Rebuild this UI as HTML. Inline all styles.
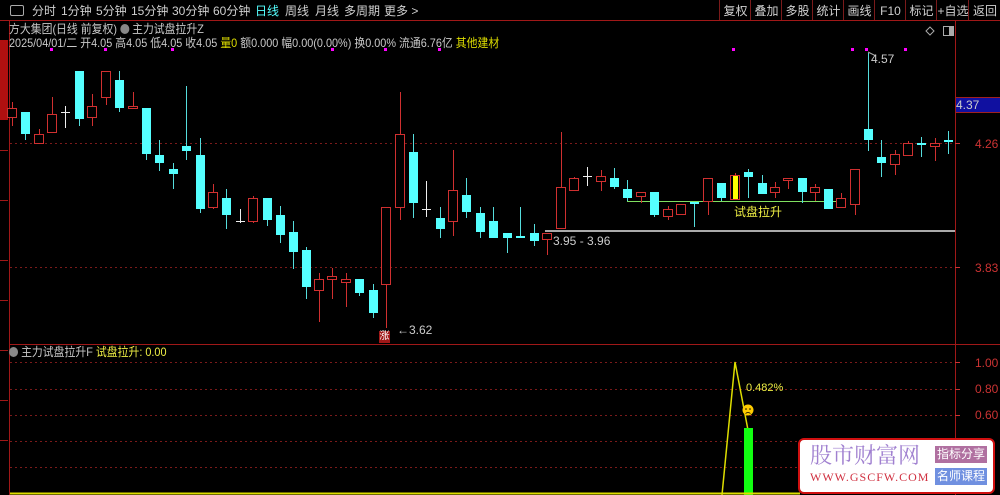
<!DOCTYPE html>
<html><head><meta charset="utf-8"><style>
html,body{margin:0;padding:0;background:#000;width:1000px;height:495px;overflow:hidden}
body{position:relative;font-family:"Liberation Sans","Noto Sans CJK SC",sans-serif;color:#c8c8c8}
.t{position:absolute;white-space:nowrap;font-size:12px;line-height:14px}
.sq{transform:scaleX(0.905);transform-origin:0 0}
.tb{position:absolute;top:0;height:20px;font-size:12px;line-height:22px;color:#d0d0d0;white-space:nowrap}
.btn{position:absolute;top:0;height:20px;border-left:1px solid #7a1a1a;text-align:center;font-size:12px;line-height:22px;color:#d0d0d0}
</style></head><body>
<svg id="s" width="1000" height="495" style="position:absolute;left:0;top:0"></svg>
<div class="tb" style="left:10px;width:18px;"><span style="display:inline-block;width:12px;height:9px;border:1px solid #aaa;margin-top:5px;border-radius:2px"></span></div>
<div class="tb" style="left:32px">分时</div>
<div class="tb" style="left:61px">1分钟</div>
<div class="tb" style="left:96px">5分钟</div>
<div class="tb" style="left:131px">15分钟</div>
<div class="tb" style="left:172px">30分钟</div>
<div class="tb" style="left:213px">60分钟</div>
<div class="tb" style="left:255px;color:#5ff">日线</div>
<div class="tb" style="left:285px">周线</div>
<div class="tb" style="left:315px">月线</div>
<div class="tb" style="left:344px">多周期</div>
<div class="tb" style="left:384px">更多 &gt;</div>
<div class="btn" style="left:719px;width:31px">复权</div>
<div class="btn" style="left:750px;width:31px">叠加</div>
<div class="btn" style="left:781px;width:31px">多股</div>
<div class="btn" style="left:812px;width:31px">统计</div>
<div class="btn" style="left:843px;width:31px">画线</div>
<div class="btn" style="left:874px;width:31px">F10</div>
<div class="btn" style="left:905px;width:31px">标记</div>
<div class="btn" style="left:936px;width:32px">+自选</div>
<div class="btn" style="left:968px;width:32px">返回</div>
<div class="t sq" style="left:9px;top:22px;color:#c8c8c8">方大集团(日线 前复权) <span style="display:inline-block;width:10px;height:10px;border-radius:5px;background:#888;vertical-align:-1px"></span> 主力试盘拉升Z</div>
<div class="t sq" style="left:9px;top:36px;color:#c8c8c8">2025/04/01/二 开4.05 高4.05 低4.05 收4.05 <span style="color:#dd0">量0</span> 额0.000 幅0.00(0.00%) 换0.00% 流通6.76亿 <span style="color:#dd0">其他建材</span></div>
<div class="t sq" style="left:9px;top:345px;color:#c8c8c8"><span style="display:inline-block;width:10px;height:10px;border-radius:5px;background:#888;vertical-align:-1px"></span> 主力试盘拉升F <span style="color:#ee4">试盘拉升: 0.00</span></div>
<div class="t" style="left:734px;top:205px;color:#ee4">试盘拉升</div>
<div class="t" style="left:553px;top:234px;color:#ccc">3.95 - 3.96</div>
<div class="t" style="left:397px;top:323px;color:#ccc">←3.62</div>
<div class="t" style="left:871px;top:52px;color:#ccc">4.57</div>
<div class="t" style="left:379px;top:331px;width:11px;height:12px;background:#a01818;color:#fff;font-size:10px;line-height:12px;text-align:center">涨</div>
<div class="t" style="left:746px;top:381px;color:#ee4;font-size:11px">0.482%</div>
<div class="t" style="left:956px;top:97px;width:44px;height:14px;background:#1010a0;color:#ccc;border-top:1px solid #a02020;border-bottom:1px solid #a02020">4.37</div>
<div class="t" style="left:975px;top:137px;color:#c33">4.26</div>
<div class="t" style="left:975px;top:261px;color:#c33">3.83</div>
<div class="t" style="left:975px;top:356px;color:#c33">1.00</div>
<div class="t" style="left:975px;top:382px;color:#c33">0.80</div>
<div class="t" style="left:975px;top:408px;color:#c33">0.60</div>
<div style="position:absolute;left:798px;top:438px;width:193px;height:52px;background:#fff;border:2px solid #d01010;border-radius:6px"></div>
<div class="t" style="left:810px;top:443px;font-size:22px;line-height:24px;color:#a080d0;font-family:'Noto Serif CJK SC',serif">股市财富网</div>
<div class="t" style="left:810px;top:470px;font-size:12px;color:#d03040;font-family:'Liberation Serif',serif;letter-spacing:1px">WWW.GSCFW.COM</div>
<div class="t" style="left:935px;top:446px;width:52px;height:17px;line-height:17px;background:#b070a0;color:#fff;text-align:center">指标分享</div>
<div class="t" style="left:935px;top:468px;width:52px;height:17px;line-height:17px;background:#7090e0;color:#fff;text-align:center">名师课程</div>
<script>
const s=document.getElementById('s');let h='';
const L=(x1,y1,x2,y2,c,w,d)=>h+=`<line x1="${x1}" y1="${y1}" x2="${x2}" y2="${y2}" stroke="${c}" stroke-width="${w||1}" ${d?'stroke-dasharray="'+d+'"':''}/>`;
const R=(x,y,w,hh,f,st)=>h+=`<rect x="${x}" y="${y}" width="${w}" height="${hh}" fill="${f}" ${st?'stroke="'+st+'"':''}/>`;
L(0,20.5,1000,20.5,'#a01818');
L(9.5,20,9.5,495,'#a01818');
L(955.5,20,955.5,495,'#a01818');
L(9,344.5,1000,344.5,'#a01818');
R(0,40,8,80,'#b01010');
[150,200,260,300,350,400,440].forEach(y=>L(0,y+.5,8,y+.5,'#a01818'));
[143,267].forEach(y=>L(10,y+.5,955,y+.5,'#7a1a1a',1,'2 3'));
[362,389,415,441,467].forEach(y=>L(10,y+.5,955,y+.5,'#7a1a1a',1,'2 3'));
[143,267,362,389,415,441].forEach(y=>L(955,y+.5,960,y+.5,'#c33'));
[51,105,172,332,385,439,733,852,866,905].forEach(x=>R(x-1,48,3,3,'#f0f'));
const C=[['r',12,108,117,102,126],['c',25,112,134,112,140],['r',39,134,143,129,143],['r',52,114,132,97,133],['w',65,112,112,106,128],['c',79,71,119,71,126],['r',92,106,117,94,126],['r',106,71,97,71,105],['c',119,80,108,71,112],['r',133,106,108,92,108],['c',146,108,154,108,160],['c',159,155,163,140,171],['c',173,169,174,163,189],['c',186,146,151,86,160],['c',200,155,209,138,213],['r',213,192,207,184,209],['c',226,198,215,189,229],['w',240,221,221,209,223],['r',253,198,221,196,223],['c',267,198,220,198,226],['c',280,215,235,206,243],['c',293,232,252,221,269],['c',306,250,287,247,299],['r',319,279,290,273,322],['r',332,276,279,268,299],['r',346,279,282,273,307],['c',359,279,293,279,296],['c',373,290,313,284,318],['r',386,207,284,207,328],['r',400,134,207,92,220],['c',413,152,203,134,218],['w',426,209,209,181,217],['c',440,218,229,207,238],['r',453,190,221,150,236],['c',466,195,212,178,218],['c',480,213,232,207,238],['c',493,221,238,207,238],['c',507,233,238,233,253],['c',520,236,238,207,238],['c',534,233,241,224,246],['r',547,233,239,233,255],['r',561,187,228,132,228],['r',574,178,190,177,190],['w',587,176,176,167,186],['r',601,176,181,170,191],['c',614,178,187,168,189],['c',627,189,198,180,201],['r',641,192,196,192,203],['c',654,192,215,192,217],['r',668,209,216,206,220],['r',681,204,214,204,214],['c',694,202,204,202,227],['r',708,178,201,178,215],['c',721,183,198,183,201],['y',735,175,199,173,199],['c',748,172,177,169,198],['c',762,183,194,175,194],['r',775,187,192,182,198],['r',788,178,180,178,189],['c',802,178,192,178,203],['r',815,187,192,184,201],['c',828,189,209,189,209],['r',841,198,207,193,207],['r',855,169,204,169,215],['c',868,129,140,53,151],['c',881,157,163,140,177],['r',895,154,164,150,175],['r',908,143,155,141,155],['c',921,143,145,137,157],['r',935,143,146,138,161],['c',948,140,142,131,154]];
L(627,201.5,840,201.5,'#80e060');
L(545,231,955,231,'#aaa',2);
L(868,52,876,56,'#aaa');
C.forEach(([t,x,a,b,u,d])=>{
 const col=t=='r'||t=='y'?'#d03030':t=='c'?'#5ff':'#eee';
 const wc=t=='c'?'#5dd':col;
 L(x+.5,u,x+.5,d,wc);
 if(t=='w'){L(x-4,a+.5,x+5,a+.5,col);return;}
 const hh=Math.max(b-a,2);
 if(t=='c')R(x-4,a,9,hh,'#5ff');
 else if(t=='y'){R(x-4.5,a+.5,9,hh,'#000','#d03030');R(x-2,a+1,5,hh-1,'#ff0');}
 else R(x-4.5,a+.5,9,hh,'#000','#d03030');
});
h+=`<polyline points="722,495 735,362 748,430" fill="none" stroke="#dd0" stroke-width="1.5"/>`;
R(744,428,9,67,'#1f1');
L(10,493.5,800,493.5,'#dd0',2);
h+=`<circle cx="748" cy="410" r="5.5" fill="#fc0"/><circle cx="746" cy="409" r=".8" fill="#000"/><circle cx="750" cy="409" r=".8" fill="#000"/><path d="M745.5,413.5 Q748,411.5 750.5,413.5" stroke="#000" fill="none" stroke-width=".8"/>`;
h+=`<path d="M930,27 L934,31 L930,35 L926,31Z" fill="none" stroke="#aaa"/>`;
R(943.5,26.5,10,9,'none','#aaa');R(949,27,4,8,'#aaa');
s.innerHTML=h;
</script>
</body></html>
